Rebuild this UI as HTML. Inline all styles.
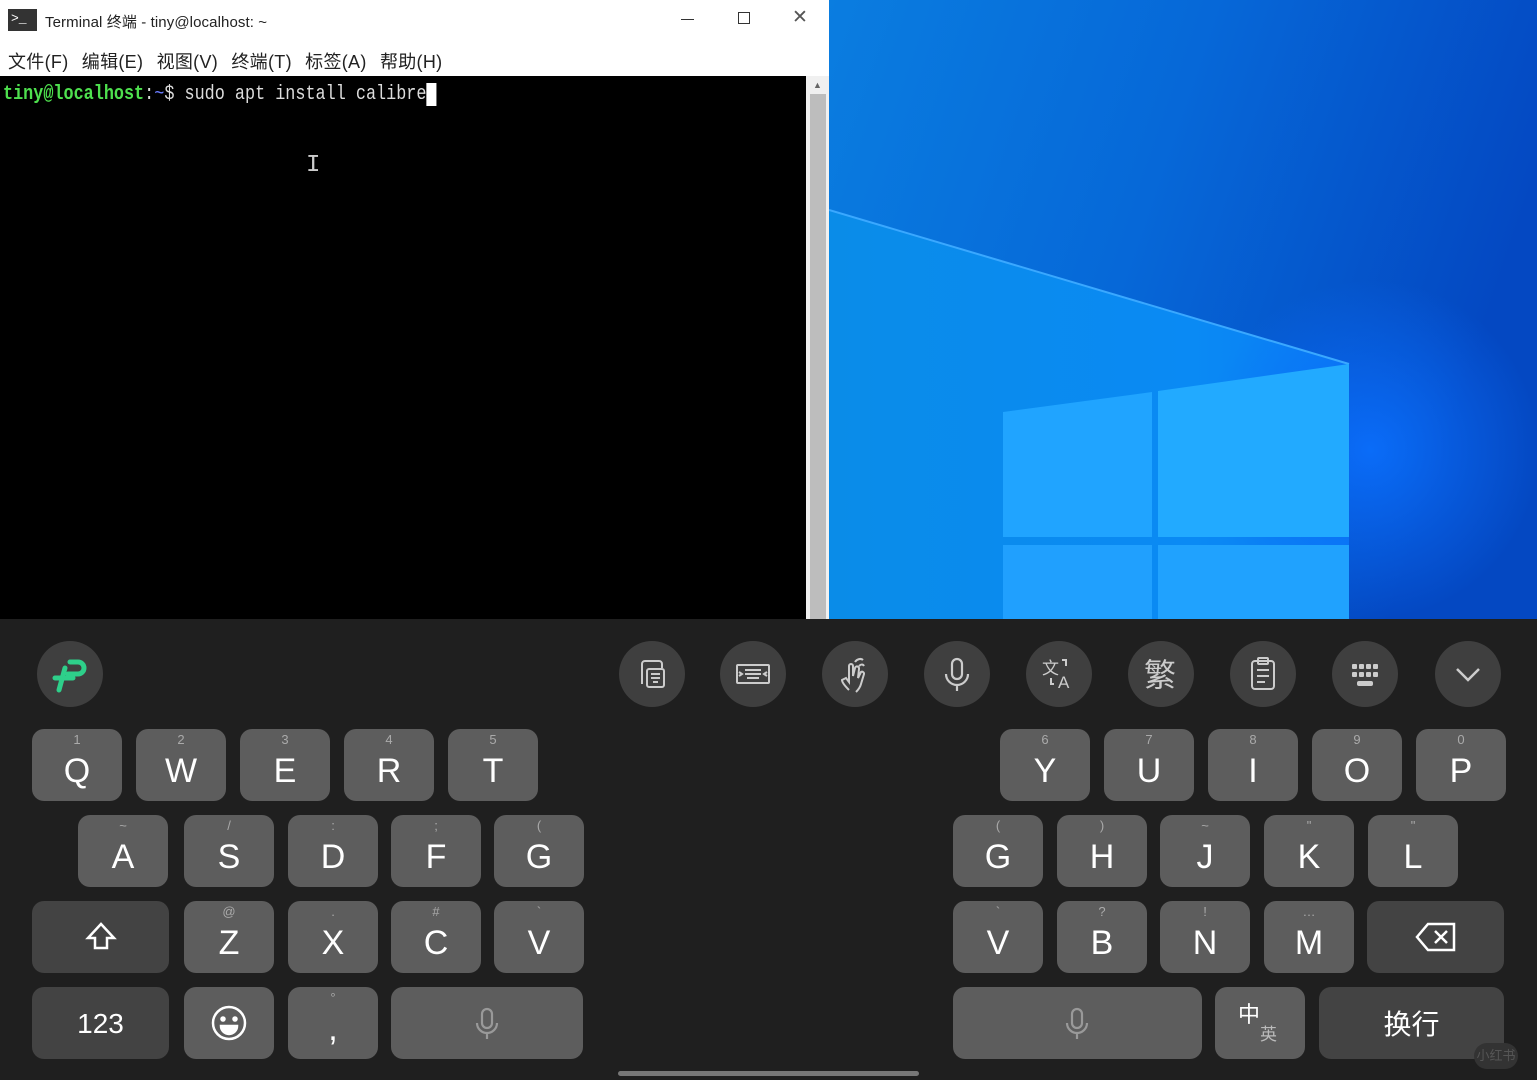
<!DOCTYPE html>
<html><head><meta charset="utf-8"><style>
*{margin:0;padding:0;box-sizing:border-box}
body{width:1537px;height:1080px;overflow:hidden;background:#1f1f1f;font-family:"Liberation Sans","Noto Sans CJK SC",sans-serif;position:relative}
.abs{position:absolute}
.title{left:0;top:0;width:829px;height:40px;background:#fff}
.menu{left:0;top:40px;width:829px;height:36px;background:#fff;font-size:18px;color:#222}
.term{left:0;top:76px;width:806px;height:543px;background:#000;font-family:"Liberation Mono",monospace;font-size:20px;color:#ddd}
.sb{left:806px;top:76px;width:23px;height:543px;background:#f0f0f0}
.key{position:absolute;width:90px;height:72px;background:#5d5d5d;border-radius:12px;color:#fff;font-size:34px;text-align:center;line-height:84px;font-family:"Liberation Sans",sans-serif}
.key.d{background:#434343}
.key i{position:absolute;left:0;right:0;top:3px;font-style:normal;font-size:13px;line-height:15px;color:#aaa}
.c{position:absolute;top:641px;width:66px;height:66px;border-radius:50%;background:#3f3f3f}
.c svg{position:absolute;left:13px;top:13px}
</style></head><body>
<div class="abs title">
 <div class="abs" style="left:8px;top:9px;width:29px;height:22px;background:#333"></div>
 <div class="abs" style="left:11px;top:11px;color:#fff;font-size:13px;font-family:'Liberation Mono'">&gt;_</div>
 <div class="abs" style="left:45px;top:11px;font-size:15px;color:#222;letter-spacing:0.1px">Terminal 终端 - tiny@localhost: ~</div>
 <div class="abs" style="left:681px;top:19px;width:13px;height:1px;background:#333"></div>
 <div class="abs" style="left:738px;top:12px;width:12px;height:12px;border:1px solid #333"></div>
 <div class="abs" style="left:792px;top:6px;font-size:19px;color:#555;font-weight:200">✕</div>
</div>
<div class="abs menu"><span class="abs" style="left:8px;top:8px;word-spacing:8px;letter-spacing:0.3px">文件(F) 编辑(E) 视图(V) 终端(T) 标签(A) 帮助(H)</span></div>
<div class="abs term">
 <div class="abs" style="left:3px;top:7px;white-space:pre;transform:scaleX(0.84);transform-origin:0 0"><span style="color:#4ee04e;font-weight:bold">tiny@localhost</span>:<span style="color:#6a7cff">~</span>$ sudo apt install calibre<span style="background:#fff"> </span></div>
 <div class="abs" style="left:306px;top:76px;color:#ccc;font-size:24px">I</div>
</div>
<div class="abs sb"><div class="abs" style="left:4px;top:18px;width:16px;height:525px;background:#bdbdbd"></div><div class="abs" style="left:7px;top:4px;font-size:9px;color:#666">▲</div></div>
<svg class="abs" style="left:829px;top:0" width="708" height="619" viewBox="829 0 708 619">
<defs>
<linearGradient id="g1" x1="0" y1="0" x2="1" y2="0.3"><stop offset="0" stop-color="#0a7de0"/><stop offset="0.5" stop-color="#0668d8"/><stop offset="1" stop-color="#0448c2"/></linearGradient>
<linearGradient id="g2" x1="0" y1="0" x2="1" y2="0"><stop offset="0" stop-color="#0a8ce8"/><stop offset="0.7" stop-color="#0a8af4"/><stop offset="1" stop-color="#0a7cf4"/></linearGradient>
<radialGradient id="g3" cx="1370" cy="450" r="170" gradientUnits="userSpaceOnUse"><stop offset="0" stop-color="#0a6cf8"/><stop offset="1" stop-color="#0a6cf8" stop-opacity="0"/></radialGradient>
</defs>
<rect x="829" y="0" width="708" height="619" fill="url(#g1)"/>
<polygon points="829,210 1349,364 1349,619 829,619" fill="url(#g2)"/>
<rect x="829" y="0" width="708" height="619" fill="url(#g3)"/>
<line x1="829" y1="210" x2="1349" y2="364" stroke="#3aa8ff" stroke-width="2"/>
<polygon points="1003,412 1152,392 1152,537 1003,537" fill="#20a4ff"/>
<polygon points="1158,391 1349,364 1349,537 1158,537" fill="#22aaff"/>
<rect x="1003" y="545" width="149" height="74" fill="#20a0fe"/>
<rect x="1158" y="545" width="191" height="74" fill="#20a2fe"/>
</svg>
<div class="c" style="left:37px;top:641px"><svg width="40" height="40" viewBox="0 0 40 40"><path d="M20 8h8a6 6 0 0 1 0 12h-10M15 14l-6 22M5 24h18" stroke="#2ecf8a" stroke-width="5" fill="none" stroke-linecap="round"/></svg></div>
<div class="c" style="left:619px"><svg width="40" height="40" viewBox="0 0 40 40" fill="none" stroke="#ccc" stroke-width="2"><path d="M10 30V10a3 3 0 0 1 3-3h14a3 3 0 0 1 3 3v4"/><rect x="15" y="15" width="17" height="18" rx="2"/><path d="M19 20h9M19 24h9M21 28h5"/></svg></div>
<div class="c" style="left:720px"><svg width="40" height="40" viewBox="0 0 40 40" fill="none" stroke="#ccc" stroke-width="2"><rect x="4" y="11" width="32" height="18" rx="1"/><path d="M12 16h16M12 20h16M14 24h12M6 18l3 2-3 2M34 18l-3 2 3 2"/></svg></div>
<div class="c" style="left:822px"><svg width="40" height="40" viewBox="0 0 40 40" fill="none" stroke="#ccc" stroke-width="2"><path d="M14 36c-4-4-7-8-7-10l4-2 3 4V12a2 2 0 0 1 4 0v10l2-8a2 2 0 0 1 4 1l-1 9 3-6a2 2 0 0 1 3 2l-3 10c-1 4-3 6-5 8"/><path d="M20 8c2-3 6-4 8-2M24 12c2-2 4-2 5 0"/></svg></div>
<div class="c" style="left:924px"><svg width="40" height="40" viewBox="0 0 40 40" fill="none" stroke="#ccc" stroke-width="2.2"><rect x="15" y="5" width="10" height="20" rx="5"/><path d="M9 20a11 11 0 0 0 22 0M20 31v6"/></svg></div>
<div class="c" style="left:1026px"><svg width="40" height="40" viewBox="0 0 40 40"><text x="3" y="20" fill="#ccc" font-size="17" font-family="Noto Sans CJK SC">文</text><text x="19" y="34" fill="#ccc" font-size="17" font-family="Liberation Sans">A</text><path d="M23 6h4v6M12 24v6h3" stroke="#ccc" stroke-width="2" fill="none"/></svg></div>
<div class="c" style="left:1128px"><svg width="40" height="40" viewBox="0 0 40 40"><text x="3" y="32" fill="#ccc" font-size="32" font-family="Noto Sans CJK SC">繁</text></svg></div>
<div class="c" style="left:1230px"><svg width="40" height="40" viewBox="0 0 40 40" fill="none" stroke="#ccc" stroke-width="2"><rect x="9" y="7" width="22" height="28" rx="3"/><rect x="15" y="4" width="10" height="6" rx="1"/><path d="M14 16h12M14 22h12M14 28h8"/></svg></div>
<div class="c" style="left:1332px"><svg width="40" height="40" viewBox="0 0 40 40" fill="#ccc"><rect x="7" y="10" width="5" height="5" rx="1"/><rect x="14" y="10" width="5" height="5" rx="1"/><rect x="21" y="10" width="5" height="5" rx="1"/><rect x="28" y="10" width="5" height="5" rx="1"/><rect x="7" y="18" width="5" height="5" rx="1"/><rect x="14" y="18" width="5" height="5" rx="1"/><rect x="21" y="18" width="5" height="5" rx="1"/><rect x="28" y="18" width="5" height="5" rx="1"/><rect x="12" y="27" width="16" height="5" rx="2"/></svg></div>
<div class="c" style="left:1435px"><svg width="40" height="40" viewBox="0 0 40 40" fill="none" stroke="#ccc" stroke-width="2.5"><path d="M9 15l11 11 11-11"/></svg></div>

<div class="key" style="left:32px;top:729px"><i>1</i>Q</div>
<div class="key" style="left:136px;top:729px"><i>2</i>W</div>
<div class="key" style="left:240px;top:729px"><i>3</i>E</div>
<div class="key" style="left:344px;top:729px"><i>4</i>R</div>
<div class="key" style="left:448px;top:729px"><i>5</i>T</div>
<div class="key" style="left:1000px;top:729px"><i>6</i>Y</div>
<div class="key" style="left:1104px;top:729px"><i>7</i>U</div>
<div class="key" style="left:1208px;top:729px"><i>8</i>I</div>
<div class="key" style="left:1312px;top:729px"><i>9</i>O</div>
<div class="key" style="left:1416px;top:729px"><i>0</i>P</div>

<div class="key" style="left:78px;top:815px"><i>~</i>A</div>
<div class="key" style="left:184px;top:815px"><i>/</i>S</div>
<div class="key" style="left:288px;top:815px"><i>:</i>D</div>
<div class="key" style="left:391px;top:815px"><i>;</i>F</div>
<div class="key" style="left:494px;top:815px"><i>(</i>G</div>
<div class="key" style="left:953px;top:815px"><i>(</i>G</div>
<div class="key" style="left:1057px;top:815px"><i>)</i>H</div>
<div class="key" style="left:1160px;top:815px"><i>~</i>J</div>
<div class="key" style="left:1264px;top:815px"><i>"</i>K</div>
<div class="key" style="left:1368px;top:815px"><i>"</i>L</div>

<div class="key d" style="left:32px;top:901px;width:137px"><svg style="position:absolute;left:51px;top:18px" width="36" height="36" viewBox="0 0 36 36" fill="none" stroke="#fff" stroke-width="2.5"><path d="M18 5L5 19h7v10h12V19h7z"/></svg></div>
<div class="key" style="left:184px;top:901px"><i>@</i>Z</div>
<div class="key" style="left:288px;top:901px"><i>.</i>X</div>
<div class="key" style="left:391px;top:901px"><i>#</i>C</div>
<div class="key" style="left:494px;top:901px"><i>`</i>V</div>
<div class="key" style="left:953px;top:901px"><i>`</i>V</div>
<div class="key" style="left:1057px;top:901px"><i>?</i>B</div>
<div class="key" style="left:1160px;top:901px"><i>!</i>N</div>
<div class="key" style="left:1264px;top:901px"><i>…</i>M</div>
<div class="key d" style="left:1367px;top:901px;width:137px"><svg style="position:absolute;left:47px;top:20px" width="44" height="32" viewBox="0 0 44 32" fill="none" stroke="#fff" stroke-width="2.5"><path d="M14 3h26v26H14L3 16z"/><path d="M21 10l12 12M33 10L21 22"/></svg></div>

<div class="key d" style="left:32px;top:987px;width:137px;font-size:28px;line-height:74px">123</div>
<div class="key" style="left:184px;top:987px"><svg style="position:absolute;left:26px;top:17px" width="38" height="38" viewBox="0 0 38 38" fill="none" stroke="#fff" stroke-width="2.5"><circle cx="19" cy="19" r="16"/><circle cx="13" cy="15" r="1.5" fill="#fff"/><circle cx="25" cy="15" r="1.5" fill="#fff"/><path d="M11 22a8 8 0 0 0 16 0z" fill="#fff"/></svg></div>
<div class="key" style="left:288px;top:987px"><i>°</i>,</div>
<div class="key" style="left:391px;top:987px;width:192px"><svg style="position:absolute;left:82px;top:20px" width="28" height="34" viewBox="0 0 28 34" fill="none" stroke="#999" stroke-width="2.2"><rect x="9" y="2" width="10" height="19" rx="5"/><path d="M4 16a10 10 0 0 0 20 0M14 26v6"/></svg></div>
<div class="key" style="left:953px;top:987px;width:249px"><svg style="position:absolute;left:110px;top:20px" width="28" height="34" viewBox="0 0 28 34" fill="none" stroke="#999" stroke-width="2.2"><rect x="9" y="2" width="10" height="19" rx="5"/><path d="M4 16a10 10 0 0 0 20 0M14 26v6"/></svg></div>
<div class="key" style="left:1215px;top:987px"><span style="position:absolute;left:23px;top:-16px;font-size:22px;font-family:'Noto Sans CJK SC'">中</span><span style="position:absolute;left:45px;top:4px;font-size:17px;color:#bbb;font-family:'Noto Sans CJK SC'">英</span></div>
<div class="key d" style="left:1319px;top:987px;width:185px;font-size:28px;font-family:'Noto Sans CJK SC';line-height:72px">换行</div>
<div class="abs" style="left:1474px;top:1043px;width:44px;height:26px;border-radius:13px;background:#333;color:#555;font-size:13px;text-align:center;line-height:26px">小红书</div>
<div class="abs" style="left:618px;top:1071px;width:301px;height:5px;border-radius:3px;background:#777"></div>
</body></html>
